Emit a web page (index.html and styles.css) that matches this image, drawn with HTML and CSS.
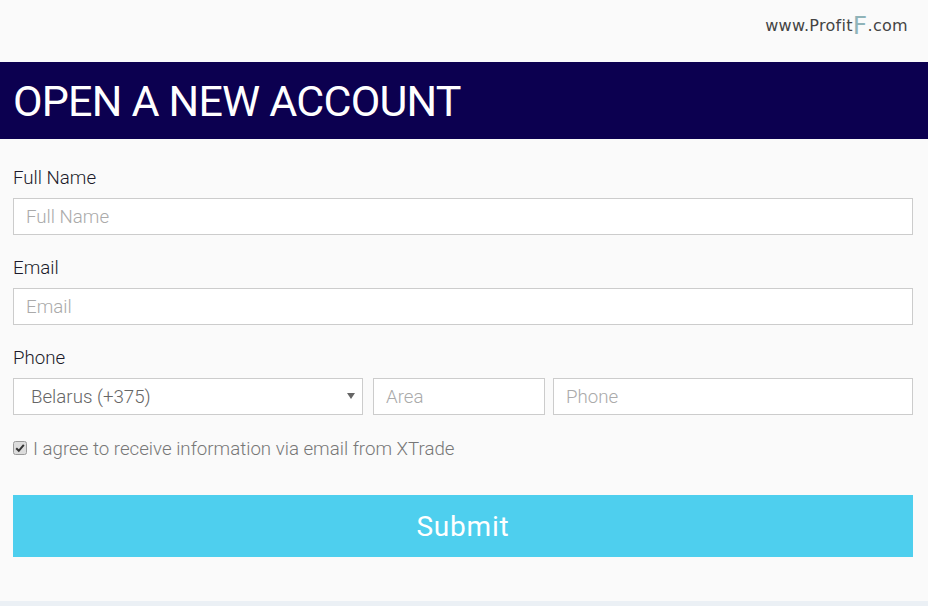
FILE: index.html
```html
<!DOCTYPE html>
<html lang="en">
<head>
<meta charset="utf-8">
<title>Open a new account</title>
<link rel="stylesheet" href="styles.css">
</head>
<body>
<div class="page">
  <div class="topbar">
    <div class="logo">www.Profit<span class="logo-f">F</span>.com</div>
  </div>
  <div class="banner"><h1>OPEN A NEW ACCOUNT</h1></div>
  <form class="form">
    <div class="field">
      <label class="label">Full Name</label>
      <input class="input" type="text" placeholder="Full Name">
    </div>
    <div class="field">
      <label class="label">Email</label>
      <input class="input" type="text" placeholder="Email">
    </div>
    <div class="field">
      <label class="label">Phone</label>
      <div class="phone-row">
        <div class="select-wrap">
          <select class="select"><option>Belarus (+375)</option></select>
          <span class="arrow"></span>
        </div>
        <input class="input area" type="text" placeholder="Area">
        <input class="input phone" type="text" placeholder="Phone">
      </div>
    </div>
    <div class="agree">
      <svg class="check" width="14" height="14" viewBox="0 0 14 14"><rect x="0.5" y="0.5" width="13" height="13" rx="2" fill="#dcdcdc" stroke="#9a9a9a"/><path d="M3.2 7.2 L5.8 9.8 L10.8 3.8" fill="none" stroke="#333" stroke-width="2"/></svg>
      <span>I agree to receive information via email from XTrade</span>
    </div>
    <button class="submit" type="button">Submit</button>
  </form>
  <div class="footer-strip"></div>
</div>
</body>
</html>
```
FILE: styles.css
```css
* { box-sizing: border-box; }
html, body { margin: 0; padding: 0; }
body {
  background: #fafafa;
  font-family: Roboto, "Liberation Sans", sans-serif;
  width: 928px;
  height: 606px;
  overflow: hidden;
}
.page { display: flex; flex-direction: column; height: 606px; }
.topbar {
  height: 62px;
  display: flex;
  justify-content: flex-end;
  padding: 11px 20px 0 0;
}
.logo {
  font-family: "DejaVu Sans", sans-serif;
  font-size: 16px;
  color: #444;
  line-height: 24px;
  letter-spacing: 0.3px;
}
.logo-f {
  font-size: 25px;
  color: #8fb3b8;
  position: relative;
  top: 3px;
}
.banner {
  height: 77px;
  background: #0c0050;
  display: flex;
  align-items: center;
  padding-left: 13px;
}
.banner h1 {
  margin: 0;
  color: #fff;
  font-weight: 400;
  font-size: 43px;
  letter-spacing: -0.8px;
  line-height: 1;
  padding-top: 2px;
}
.form {
  display: flex;
  flex-direction: column;
  padding: 28px 15px 0 13px;
}
.field { display: flex; flex-direction: column; margin-bottom: 22px; }
.label {
  font-size: 18.7px;
  font-weight: 300;
  color: #1a1a2a;
  line-height: 22px;
  margin-bottom: 9px;
}
.input, .select {
  height: 37px;
  border: 1px solid #cccccc;
  background: #fff;
  font-family: Roboto, "Liberation Sans", sans-serif;
  font-size: 18.7px;
  font-weight: 300;
  padding: 0 12px;
  color: #555;
  outline: none;
  border-radius: 0;
}
.input::placeholder { color: #aaa; }
.phone-row { display: flex; }
.select-wrap { position: relative; width: 350px; margin-right: 10px; }
.select {
  width: 100%;
  appearance: none;
  -webkit-appearance: none;
  padding-left: 17px;
  color: #666;
}
.arrow {
  position: absolute;
  right: 8px;
  top: 15px;
  width: 0; height: 0;
  border-left: 4px solid transparent;
  border-right: 4px solid transparent;
  border-top: 6px solid #666;
}
.area { width: 172px; margin-right: 8px; }
.phone { flex: 1; }
.agree {
  display: flex;
  align-items: center;
  gap: 6px;
  font-size: 18.7px;
  font-weight: 300;
  color: #777;
  margin-top: 1px;
}
.check { flex: none; margin-top: -2px; }
.submit {
  margin-top: 35px;
  height: 62px;
  border: none;
  background: #4ecfee;
  color: #fff;
  font-family: Roboto, "Liberation Sans", sans-serif;
  font-size: 28px;
  letter-spacing: 0.8px;
  font-weight: 400;
  padding: 0;
  width: 900px;
}
.footer-strip { margin-top: auto; height: 5px; background: #ebf0f5; }
```
